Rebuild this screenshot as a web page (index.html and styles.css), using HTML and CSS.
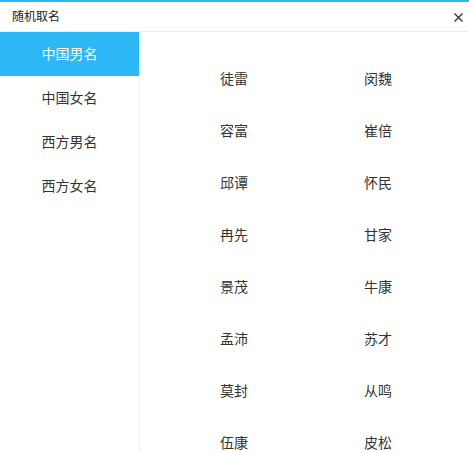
FILE: index.html
```html
<!DOCTYPE html>
<html lang="zh">
<head>
<meta charset="utf-8">
<title>随机取名</title>
<link rel="stylesheet" href="styles.css">
</head>
<body>
<div class="dialog">
  <div class="titlebar">
    <span class="title">随机取名</span>
    <span class="close" aria-label="关闭">
      <svg width="9" height="9" viewBox="0 0 9 9"><path d="M0.5 0.5 L8.5 8.5 M8.5 0.5 L0.5 8.5" stroke="#333" stroke-width="1.3" fill="none"/></svg>
    </span>
  </div>
  <div class="body">
    <ul class="sidebar">
      <li class="item active">中国男名</li>
      <li class="item">中国女名</li>
      <li class="item">西方男名</li>
      <li class="item">西方女名</li>
    </ul>
    <div class="names">
      <div class="name">徒雷</div><div class="name">闵魏</div>
      <div class="name">容富</div><div class="name">崔倍</div>
      <div class="name">邱谭</div><div class="name">怀民</div>
      <div class="name">冉先</div><div class="name">甘家</div>
      <div class="name">景茂</div><div class="name">牛康</div>
      <div class="name">孟沛</div><div class="name">苏才</div>
      <div class="name">莫封</div><div class="name">从鸣</div>
      <div class="name">伍康</div><div class="name">皮松</div>
    </div>
  </div>
</div>
</body>
</html>
```
FILE: styles.css
```css
html, body {
  margin: 0;
  padding: 0;
  height: 100%;
  overflow: hidden;
  background: #fff;
}
body {
  font-family: "Noto Sans CJK SC", "Microsoft YaHei", sans-serif;
  color: #333;
}
.dialog {
  border-top: 2px solid #2db7f5;
  height: 451px;
  display: flex;
  flex-direction: column;
}
.titlebar {
  height: 29px;
  border-bottom: 1px solid #eeeeee;
  display: flex;
  align-items: center;
  justify-content: space-between;
  padding: 0 6px 0 12px;
}
.title {
  font-size: 12px;
  color: #222;
  line-height: 1;
  padding-bottom: 1px;
}
.close {
  display: flex;
  width: 9px;
  height: 9px;
  margin-top: 1px;
}
.body {
  flex: 1;
  display: flex;
  min-height: 0;
}
.sidebar {
  list-style: none;
  margin: 0;
  padding: 0;
  width: 139px;
  border-right: 1px solid #f0f0f0;
  flex-shrink: 0;
}
.item {
  height: 44px;
  box-sizing: border-box;
  padding-bottom: 3px;
  display: flex;
  align-items: center;
  justify-content: center;
  font-size: 14px;
  color: #333;
}
.item.active {
  background: #2db7f5;
  color: #fff;
}
.names {
  flex: 1;
  display: grid;
  grid-template-columns: 1fr 1fr;
  grid-auto-rows: 52px;
  padding: 20px 19px 0 22px;
  align-content: start;
}
.name {
  display: flex;
  align-items: center;
  justify-content: center;
  font-size: 14px;
  color: #333;
}
```
